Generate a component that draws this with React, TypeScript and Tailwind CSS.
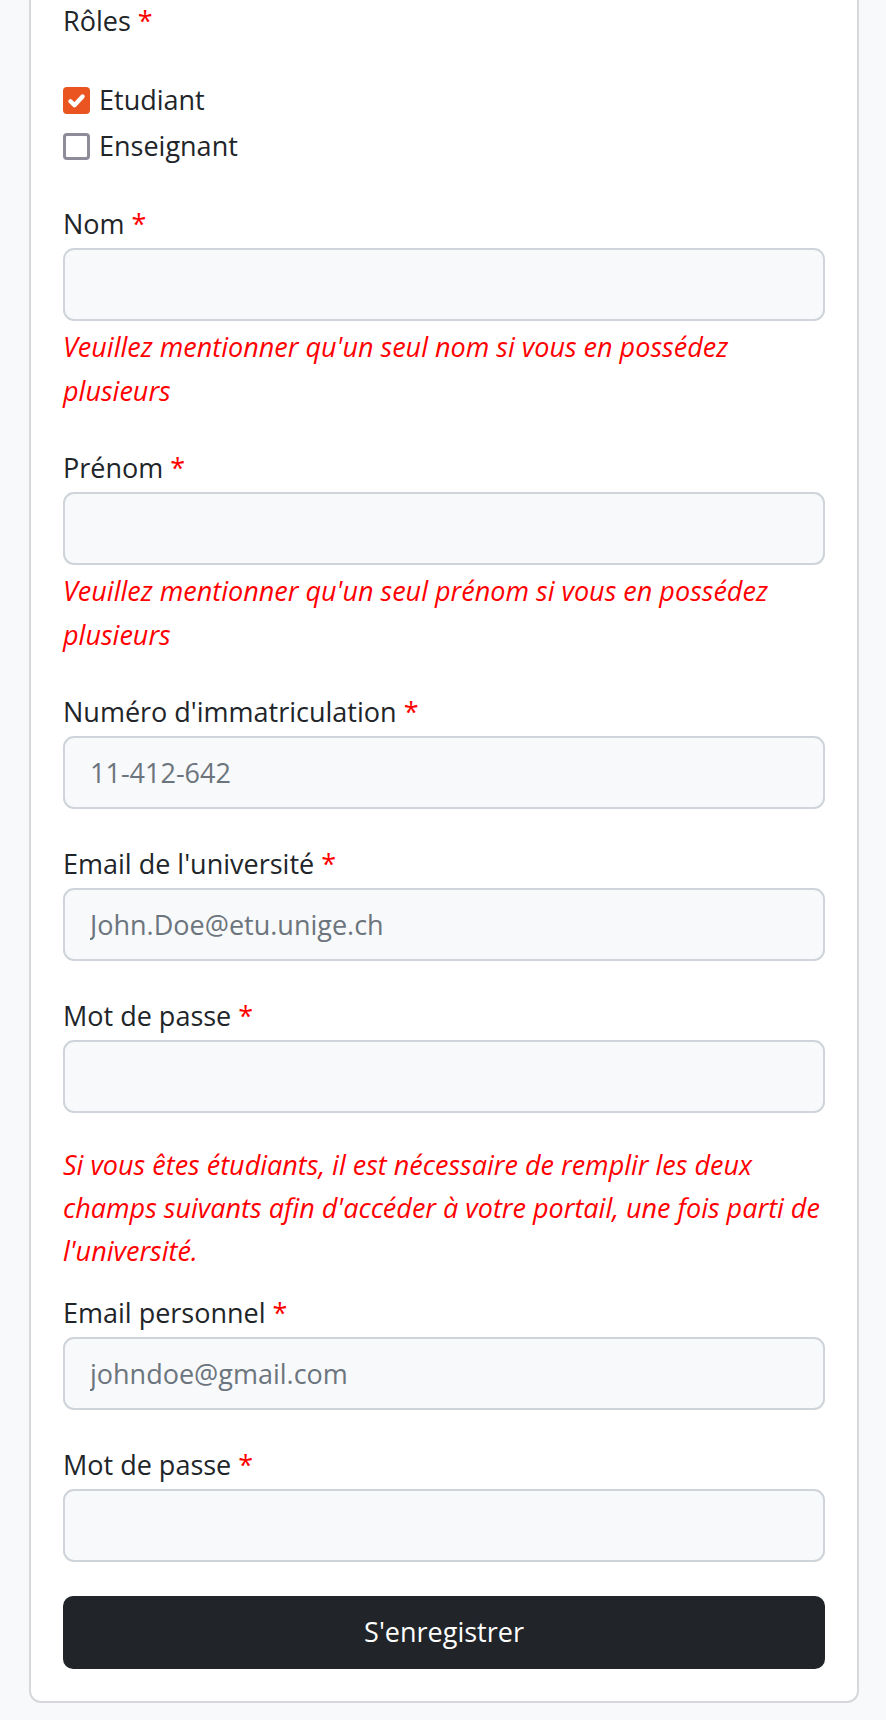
import React from 'react';

const font = { fontFamily: '"Open Sans", "Noto Sans", sans-serif' };

function Label({ text }: { text: string }) {
  return (
    <label className="block text-[27px] leading-[38px] text-[#212529]">
      {text} <span className="text-[#ff0000]">*</span>
    </label>
  );
}

function Input({ placeholder }: { placeholder?: string }) {
  return (
    <input
      type="text"
      placeholder={placeholder}
      className="mt-[5px] block h-[73px] w-full rounded-[11px] border-2 border-[#ced4da] bg-[#f8f9fa] px-[25px] text-[27px] text-[#212529] placeholder:text-[#6c757d] focus:outline-none"
    />
  );
}

// help text under a field
function Hint({ children }: { children: React.ReactNode }) {
  return <p className="mt-[4px] text-[27px] italic leading-[44px] text-[#ff0000]">{children}</p>;
}

export default function App() {
  return (
    <div className="min-h-[1720px] w-[886px] bg-[#f8f9fa] pl-[29px] pr-[27px]" style={font}>
      <div className="rounded-b-[12px] border-x-2 border-b-2 border-[#d6d8db] bg-white px-[32px] pb-[32px]">
        {/* Rôles */}
        <div className="pt-[2px]">
          <Label text="Rôles" />
          <div className="mt-[37px]">
            <label className="flex h-[46px] items-center gap-[9px] text-[27px] text-[#212529]">
              <span className="flex h-[27px] w-[27px] items-center justify-center rounded-[4px] bg-[#e95420]">
                <svg width="27" height="27" viewBox="0 0 20 20" fill="none">
                  <path d="M5.5 10.5l3 3 6-6.5" stroke="#fff" strokeWidth="3.2" strokeLinecap="round" strokeLinejoin="round" />
                </svg>
              </span>
              Etudiant
            </label>
            <label className="flex h-[46px] items-center gap-[9px] text-[27px] text-[#212529]">
              <span className="h-[27px] w-[27px] rounded-[4px] border-[3px] border-[#8e8c99] bg-white" />
              Enseignant
            </label>
          </div>
        </div>

        <div className="mt-[36px]">
          <Label text="Nom" />
          <Input />
          <Hint>Veuillez mentionner qu'un seul nom si vous en possédez plusieurs</Hint>
        </div>

        <div className="mt-[36px]">
          <Label text="Prénom" />
          <Input />
          <Hint>Veuillez mentionner qu'un seul prénom si vous en possédez plusieurs</Hint>
        </div>

        <div className="mt-[36px]">
          <Label text="Numéro d'immatriculation" />
          <Input placeholder="11-412-642" />
        </div>

        <div className="mt-[36px]">
          <Label text="Email de l'université" />
          <Input placeholder="John.Doe@etu.unige.ch" />
        </div>

        <div className="mt-[36px]">
          <Label text="Mot de passe" />
          <Input />
        </div>

        <p className="mt-[30px] text-[27px] italic leading-[43px] text-[#ff0000]">
          Si vous êtes étudiants, il est nécessaire de remplir les deux champs suivants afin d'accéder à votre portail, une fois parti de l'université.
        </p>

        <div className="mt-[22px]">
          <Label text="Email personnel" />
          <Input placeholder="johndoe@gmail.com" />
        </div>

        <div className="mt-[36px]">
          <Label text="Mot de passe" />
          <Input />
        </div>

        <button className="mt-[34px] flex h-[73px] w-full items-center justify-center rounded-[10px] bg-[#212529] text-[27px] text-white">
          S'enregistrer
        </button>
      </div>
    </div>
  );
}
